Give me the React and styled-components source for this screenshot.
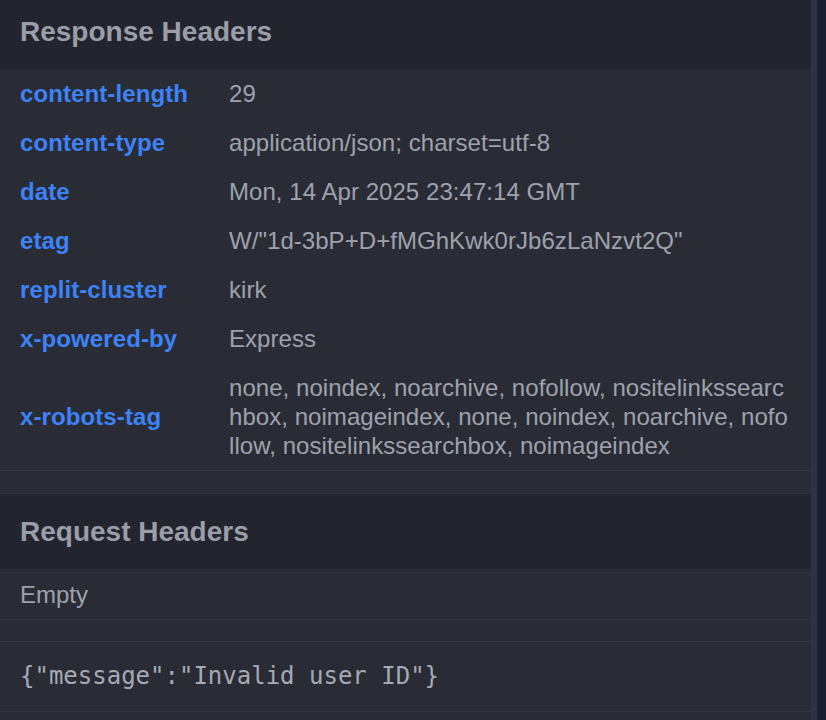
import React from 'react';
import styled, { createGlobalStyle } from 'styled-components';

const GlobalStyle = createGlobalStyle`
  html, body {
    margin: 0;
    padding: 0;
    background: #292c35;
    overflow: hidden;
  }
  body {
    font-family: "Liberation Sans", Arial, sans-serif;
  }
`;

const Screen = styled.div`
  display: flex;
  width: 826px;
  height: 720px;
  overflow: hidden;
`;

// panel is scrolled a few pixels, so the first title is cut at the top
const Panel = styled.div`
  width: 811px;
  flex-shrink: 0;
  background: #292c35;
  display: flex;
  flex-direction: column;
  margin-top: -6px;
`;

const ScrollGutter = styled.div`
  width: 6px;
  flex-shrink: 0;
  background: #2d3245;
`;

const ScrollTrack = styled.div`
  flex: 1;
  background: #1b2133;
`;

const SectionTitle = styled.div`
  height: 75px;
  display: flex;
  align-items: center;
  padding: 0 20px;
  background: #22252d;
  color: #9a9ea9;
  font-size: 28px;
  font-weight: 700;
  flex-shrink: 0;
`;

const HeaderTable = styled.div`
  display: grid;
  grid-template-columns: 209px 561px;
  padding: 0 21px 0 20px;
  border-bottom: 1px solid #33363f;
`;

const Key = styled.div`
  display: flex;
  align-items: center;
  padding: 10px 0;
  color: #3d82f6;
  font-size: 24px;
  font-weight: 700;
  line-height: 29px;
  letter-spacing: 0.1px;
`;

const Value = styled.div`
  padding: 10px 0;
  color: #9ea2ad;
  font-size: 24px;
  line-height: 29px;
  word-break: break-all;
  letter-spacing: 0.05px;
`;

const Spacer = styled.div`
  height: ${p => p.$h || 22}px;
  border-bottom: 1px solid #33363f;
  flex-shrink: 0;
`;

const EmptyNote = styled.div`
  padding: 11px 20px 10px;
  color: #9ea2ad;
  font-size: 24px;
  line-height: 29px;
  border-bottom: 1px solid #33363f;
`;

const Body = styled.pre`
  margin: 0;
  padding: 20px 20px;
  color: #a6aab4;
  font-family: "DejaVu Sans Mono", "Liberation Mono", monospace;
  font-size: 24px;
  line-height: 29px;
  border-bottom: 1px solid #33363f;
`;

const responseHeaders = [
  ['content-length', '29'],
  ['content-type', 'application/json; charset=utf-8'],
  ['date', 'Mon, 14 Apr 2025 23:47:14 GMT'],
  ['etag', 'W/"1d-3bP+D+fMGhKwk0rJb6zLaNzvt2Q"'],
  ['replit-cluster', 'kirk'],
  ['x-powered-by', 'Express'],
  ['x-robots-tag', 'none, noindex, noarchive, nofollow, nositelinkssearchbox, noimageindex, none, noindex, noarchive, nofollow, nositelinkssearchbox, noimageindex'],
];

export default function App() {
  return (
    <>
      <GlobalStyle />
      <Screen>
        <Panel>
          <SectionTitle>Response Headers</SectionTitle>
          <HeaderTable>
            {responseHeaders.map(([k, v]) => (
              <React.Fragment key={k}>
                <Key>{k}</Key>
                <Value>{v}</Value>
              </React.Fragment>
            ))}
          </HeaderTable>
          <Spacer />
          <SectionTitle>Request Headers</SectionTitle>
          <EmptyNote>Empty</EmptyNote>
          <Spacer $h={21} />
          <Body>{'{"message":"Invalid user ID"}'}</Body>
        </Panel>
        <ScrollGutter />
        <ScrollTrack />
      </Screen>
    </>
  );
}
